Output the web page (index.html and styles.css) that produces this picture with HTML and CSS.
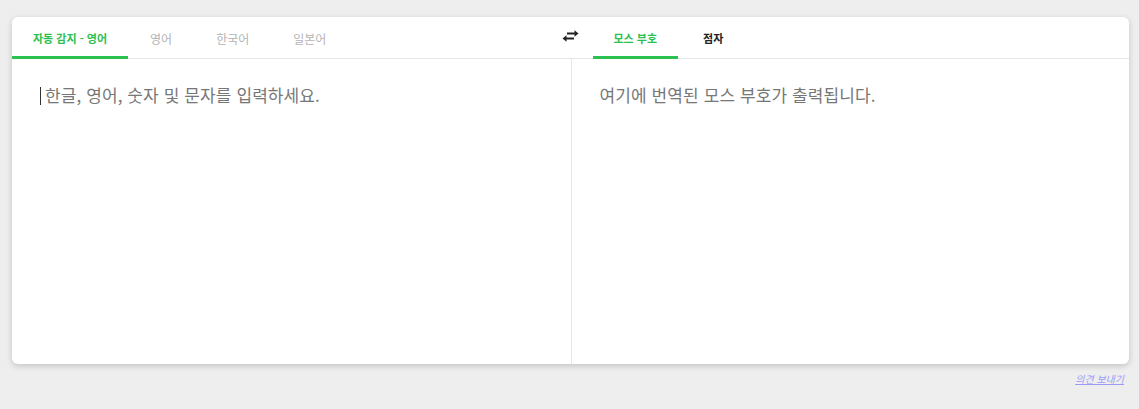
FILE: index.html
```
<!DOCTYPE html>
<html lang="ko">
<head>
    <meta charset="UTF-8">
    <meta name="viewport" content="width=device-width, initial-scale=1.0">
    <title>모스 부호 번역기</title>
    <link rel="stylesheet" href="styles.css">
</head>
<body>
<div class="translator">
    <div class="tab-bar">
        <div class="tab-group">
            <div class="tab active">자동 감지 - 영어</div>
            <div class="tab">영어</div>
            <div class="tab">한국어</div>
            <div class="tab">일본어</div>
        </div>
        <div class="tab-group right">
            <button class="swap-btn" title="바꾸기">
                <svg width="17" height="12" viewBox="0 0 17 12">
                    <path d="M5 3.5H14" stroke="#222" stroke-width="2.2"/>
                    <path d="M12.5 0.3L16.5 3.5L12.5 6.7Z" fill="#222"/>
                    <path d="M12 8.5H3" stroke="#222" stroke-width="2.2"/>
                    <path d="M4.5 5.3L0.5 8.5L4.5 11.7Z" fill="#222"/>
                </svg>
            </button>
            <div class="tab active">모스 부호</div>
            <div class="tab dark">점자</div>
        </div>
    </div>
    <div class="panes">
        <div class="pane">
            <div class="placeholder"><span class="caret"></span>한글, 영어, 숫자 및 문자를 입력하세요.</div>
        </div>
        <div class="pane output">
            <div class="placeholder">여기에 번역된 모스 부호가 출력됩니다.</div>
        </div>
    </div>
</div>
<div class="footer">
    <a href="#" class="feedback">의견 보내기</a>
</div>
</body>
</html>
```
FILE: styles.css
```
body {
    margin: 0;
    padding: 17px 10px 0 12px;
    background-color: #eeeeee;
    font-family: "Noto Sans CJK KR", "Noto Sans", sans-serif;
}

.translator {
    background-color: white;
    border-radius: 6px;
    box-shadow: 0 2px 6px rgba(0, 0, 0, 0.18);
    height: 347px;
    display: flex;
    flex-direction: column;
    overflow: hidden;
}

.tab-bar {
    display: grid;
    grid-template-columns: 1fr 1fr;
    height: 41px;
    border-bottom: 1px solid #e6e6e6;
}

.tab-group {
    display: flex;
    align-items: stretch;
}

.tab {
    display: flex;
    align-items: center;
    padding: 3px 22px 0;
    font-size: 12px;
    color: #b4b4b4;
    border-bottom: 3px solid transparent;
    margin-bottom: -1px;
}

.tab.active {
    padding: 3px 21px 0;
    font-size: 11px;
    font-weight: bold;
    color: #2ac150;
    border-bottom-color: #2ac150;
}

.tab.dark {
    font-size: 11px;
    font-weight: bold;
    color: #222;
    padding-left: 25px;
}

.swap-btn {
    width: 22px;
    margin-left: -11px;
    margin-right: 11px;
    padding: 0 0 3px;
    border: none;
    background: none;
    display: flex;
    align-items: center;
    justify-content: center;
    cursor: pointer;
}

.panes {
    flex: 1;
    display: grid;
    grid-template-columns: 1fr 1fr;
}

.pane {
    padding: 24px 28px;
}

.pane.output {
    border-left: 1px solid #e6e6e6;
}

.placeholder {
    font-size: 17px;
    line-height: 24px;
    color: #777777;
    letter-spacing: 0.1px;
}

.caret {
    display: inline-block;
    width: 1px;
    height: 18px;
    margin-right: 4px;
    background-color: #333;
    vertical-align: -3px;
}

.footer {
    display: flex;
    justify-content: flex-end;
    padding: 7px 5px 0 0;
}

.feedback {
    font-size: 10px;
    font-style: italic;
    color: #9b9bf5;
}
```
